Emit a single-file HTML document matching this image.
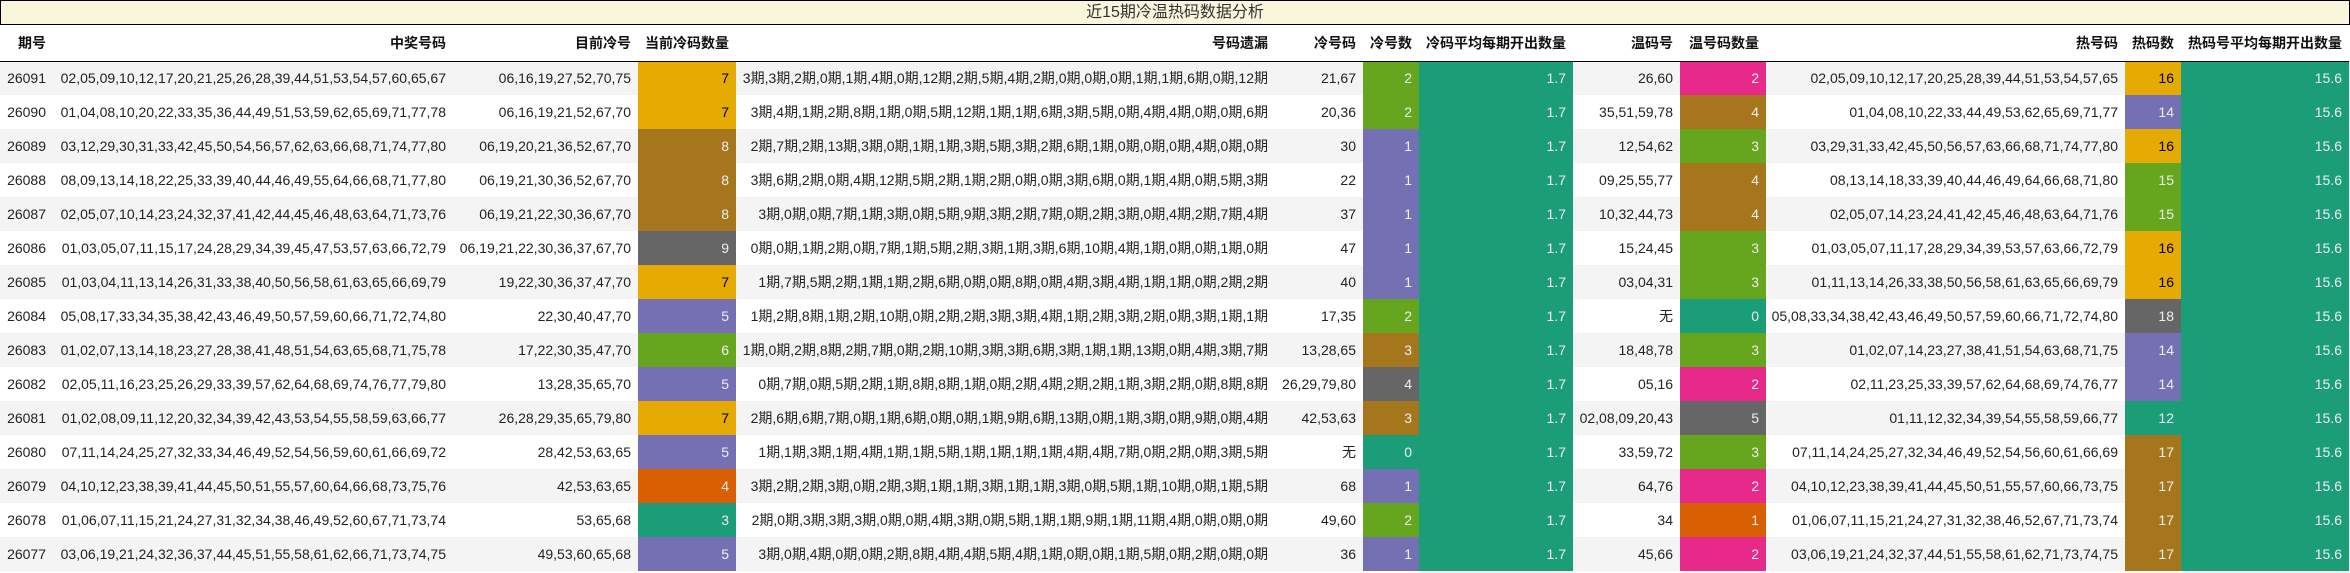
<!DOCTYPE html>
<html><head><meta charset="utf-8">
<style>
*{margin:0;padding:0;box-sizing:border-box}
html,body{width:2350px;height:573px;overflow:hidden;background:#fff}
body{font-family:"Liberation Sans","Noto Sans CJK SC",sans-serif;font-size:14px;color:#222}
.title{height:25px;border:1px solid #000;background:#f9f6dc;text-align:center;font-size:16px;line-height:23px;color:#333;width:2350px}
table{border-collapse:collapse;table-layout:fixed;width:2349px}
td,th{padding:0 7px 0 0;text-align:right;white-space:nowrap;overflow:visible}
th{height:36px;font-weight:bold;color:#111;border-bottom:1px solid #000}
td{height:34px}
tbody tr:nth-child(odd){background:#f4f4f4}
tbody tr:nth-child(even){background:#fff}
.y{background:#e6ab02;color:#000}
.b{background:#a6761d;color:#eee}
.g{background:#666;color:#eee}
.p{background:#7570b3;color:#eee}
.n{background:#66a61e;color:#eee}
.t{background:#1b9e77;color:#eee}
.o{background:#d95f02;color:#eee}
.k{background:#e7298a;color:#eee}
</style></head><body>
<div class="title">近15期冷温热码数据分析</div>
<table>
<colgroup>
<col style="width:53px"><col style="width:400px"><col style="width:185px"><col style="width:98px"><col style="width:539px"><col style="width:88px"><col style="width:56px"><col style="width:154px"><col style="width:107px"><col style="width:86px"><col style="width:359px"><col style="width:56px"><col style="width:168px">
</colgroup>
<thead><tr><th>期号</th><th>中奖号码</th><th>目前冷号</th><th>当前冷码数量</th><th>号码遗漏</th><th>冷号码</th><th>冷号数</th><th>冷码平均每期开出数量</th><th>温码号</th><th>温号码数量</th><th>热号码</th><th>热码数</th><th>热码号平均每期开出数量</th></tr></thead>
<tbody>
<tr><td>26091</td><td>02,05,09,10,12,17,20,21,25,26,28,39,44,51,53,54,57,60,65,67</td><td>06,16,19,27,52,70,75</td><td class="y">7</td><td>3期,3期,2期,0期,1期,4期,0期,12期,2期,5期,4期,2期,0期,0期,0期,1期,1期,6期,0期,12期</td><td>21,67</td><td class="n">2</td><td class="t">1.7</td><td>26,60</td><td class="k">2</td><td>02,05,09,10,12,17,20,25,28,39,44,51,53,54,57,65</td><td class="y">16</td><td class="t">15.6</td></tr>
<tr><td>26090</td><td>01,04,08,10,20,22,33,35,36,44,49,51,53,59,62,65,69,71,77,78</td><td>06,16,19,21,52,67,70</td><td class="y">7</td><td>3期,4期,1期,2期,8期,1期,0期,5期,12期,1期,1期,6期,3期,5期,0期,4期,4期,0期,0期,6期</td><td>20,36</td><td class="n">2</td><td class="t">1.7</td><td>35,51,59,78</td><td class="b">4</td><td>01,04,08,10,22,33,44,49,53,62,65,69,71,77</td><td class="p">14</td><td class="t">15.6</td></tr>
<tr><td>26089</td><td>03,12,29,30,31,33,42,45,50,54,56,57,62,63,66,68,71,74,77,80</td><td>06,19,20,21,36,52,67,70</td><td class="b">8</td><td>2期,7期,2期,13期,3期,0期,1期,1期,3期,5期,3期,2期,6期,1期,0期,0期,0期,4期,0期,0期</td><td>30</td><td class="p">1</td><td class="t">1.7</td><td>12,54,62</td><td class="n">3</td><td>03,29,31,33,42,45,50,56,57,63,66,68,71,74,77,80</td><td class="y">16</td><td class="t">15.6</td></tr>
<tr><td>26088</td><td>08,09,13,14,18,22,25,33,39,40,44,46,49,55,64,66,68,71,77,80</td><td>06,19,21,30,36,52,67,70</td><td class="b">8</td><td>3期,6期,2期,0期,4期,12期,5期,2期,1期,2期,0期,0期,3期,6期,0期,1期,4期,0期,5期,3期</td><td>22</td><td class="p">1</td><td class="t">1.7</td><td>09,25,55,77</td><td class="b">4</td><td>08,13,14,18,33,39,40,44,46,49,64,66,68,71,80</td><td class="n">15</td><td class="t">15.6</td></tr>
<tr><td>26087</td><td>02,05,07,10,14,23,24,32,37,41,42,44,45,46,48,63,64,71,73,76</td><td>06,19,21,22,30,36,67,70</td><td class="b">8</td><td>3期,0期,0期,7期,1期,3期,0期,5期,9期,3期,2期,7期,0期,2期,3期,0期,4期,2期,7期,4期</td><td>37</td><td class="p">1</td><td class="t">1.7</td><td>10,32,44,73</td><td class="b">4</td><td>02,05,07,14,23,24,41,42,45,46,48,63,64,71,76</td><td class="n">15</td><td class="t">15.6</td></tr>
<tr><td>26086</td><td>01,03,05,07,11,15,17,24,28,29,34,39,45,47,53,57,63,66,72,79</td><td>06,19,21,22,30,36,37,67,70</td><td class="g">9</td><td>0期,0期,1期,2期,0期,7期,1期,5期,2期,3期,1期,3期,6期,10期,4期,1期,0期,0期,1期,0期</td><td>47</td><td class="p">1</td><td class="t">1.7</td><td>15,24,45</td><td class="n">3</td><td>01,03,05,07,11,17,28,29,34,39,53,57,63,66,72,79</td><td class="y">16</td><td class="t">15.6</td></tr>
<tr><td>26085</td><td>01,03,04,11,13,14,26,31,33,38,40,50,56,58,61,63,65,66,69,79</td><td>19,22,30,36,37,47,70</td><td class="y">7</td><td>1期,7期,5期,2期,1期,1期,2期,6期,0期,0期,8期,0期,4期,3期,4期,1期,1期,0期,2期,2期</td><td>40</td><td class="p">1</td><td class="t">1.7</td><td>03,04,31</td><td class="n">3</td><td>01,11,13,14,26,33,38,50,56,58,61,63,65,66,69,79</td><td class="y">16</td><td class="t">15.6</td></tr>
<tr><td>26084</td><td>05,08,17,33,34,35,38,42,43,46,49,50,57,59,60,66,71,72,74,80</td><td>22,30,40,47,70</td><td class="p">5</td><td>1期,2期,8期,1期,2期,10期,0期,2期,2期,3期,3期,4期,1期,2期,3期,2期,0期,3期,1期,1期</td><td>17,35</td><td class="n">2</td><td class="t">1.7</td><td>无</td><td class="t">0</td><td>05,08,33,34,38,42,43,46,49,50,57,59,60,66,71,72,74,80</td><td class="g">18</td><td class="t">15.6</td></tr>
<tr><td>26083</td><td>01,02,07,13,14,18,23,27,28,38,41,48,51,54,63,65,68,71,75,78</td><td>17,22,30,35,47,70</td><td class="n">6</td><td>1期,0期,2期,8期,2期,7期,0期,2期,10期,3期,3期,6期,3期,1期,1期,13期,0期,4期,3期,7期</td><td>13,28,65</td><td class="b">3</td><td class="t">1.7</td><td>18,48,78</td><td class="n">3</td><td>01,02,07,14,23,27,38,41,51,54,63,68,71,75</td><td class="p">14</td><td class="t">15.6</td></tr>
<tr><td>26082</td><td>02,05,11,16,23,25,26,29,33,39,57,62,64,68,69,74,76,77,79,80</td><td>13,28,35,65,70</td><td class="p">5</td><td>0期,7期,0期,5期,2期,1期,8期,8期,1期,0期,2期,4期,2期,2期,1期,3期,2期,0期,8期,8期</td><td>26,29,79,80</td><td class="g">4</td><td class="t">1.7</td><td>05,16</td><td class="k">2</td><td>02,11,23,25,33,39,57,62,64,68,69,74,76,77</td><td class="p">14</td><td class="t">15.6</td></tr>
<tr><td>26081</td><td>01,02,08,09,11,12,20,32,34,39,42,43,53,54,55,58,59,63,66,77</td><td>26,28,29,35,65,79,80</td><td class="y">7</td><td>2期,6期,6期,7期,0期,1期,6期,0期,0期,1期,9期,6期,13期,0期,1期,3期,0期,9期,0期,4期</td><td>42,53,63</td><td class="b">3</td><td class="t">1.7</td><td>02,08,09,20,43</td><td class="g">5</td><td>01,11,12,32,34,39,54,55,58,59,66,77</td><td class="t">12</td><td class="t">15.6</td></tr>
<tr><td>26080</td><td>07,11,14,24,25,27,32,33,34,46,49,52,54,56,59,60,61,66,69,72</td><td>28,42,53,63,65</td><td class="p">5</td><td>1期,1期,3期,1期,4期,1期,1期,5期,1期,1期,1期,1期,4期,4期,7期,0期,2期,0期,3期,5期</td><td>无</td><td class="t">0</td><td class="t">1.7</td><td>33,59,72</td><td class="n">3</td><td>07,11,14,24,25,27,32,34,46,49,52,54,56,60,61,66,69</td><td class="b">17</td><td class="t">15.6</td></tr>
<tr><td>26079</td><td>04,10,12,23,38,39,41,44,45,50,51,55,57,60,64,66,68,73,75,76</td><td>42,53,63,65</td><td class="o">4</td><td>3期,2期,2期,3期,0期,2期,3期,1期,1期,3期,1期,1期,3期,0期,5期,1期,10期,0期,1期,5期</td><td>68</td><td class="p">1</td><td class="t">1.7</td><td>64,76</td><td class="k">2</td><td>04,10,12,23,38,39,41,44,45,50,51,55,57,60,66,73,75</td><td class="b">17</td><td class="t">15.6</td></tr>
<tr><td>26078</td><td>01,06,07,11,15,21,24,27,31,32,34,38,46,49,52,60,67,71,73,74</td><td>53,65,68</td><td class="t">3</td><td>2期,0期,3期,3期,3期,0期,0期,4期,3期,0期,5期,1期,1期,9期,1期,11期,4期,0期,0期,0期</td><td>49,60</td><td class="n">2</td><td class="t">1.7</td><td>34</td><td class="o">1</td><td>01,06,07,11,15,21,24,27,31,32,38,46,52,67,71,73,74</td><td class="b">17</td><td class="t">15.6</td></tr>
<tr><td>26077</td><td>03,06,19,21,24,32,36,37,44,45,51,55,58,61,62,66,71,73,74,75</td><td>49,53,60,65,68</td><td class="p">5</td><td>3期,0期,4期,0期,0期,2期,8期,4期,4期,5期,4期,1期,0期,0期,1期,5期,0期,2期,0期,0期</td><td>36</td><td class="p">1</td><td class="t">1.7</td><td>45,66</td><td class="k">2</td><td>03,06,19,21,24,32,37,44,51,55,58,61,62,71,73,74,75</td><td class="b">17</td><td class="t">15.6</td></tr>
</tbody></table>
</body></html>
